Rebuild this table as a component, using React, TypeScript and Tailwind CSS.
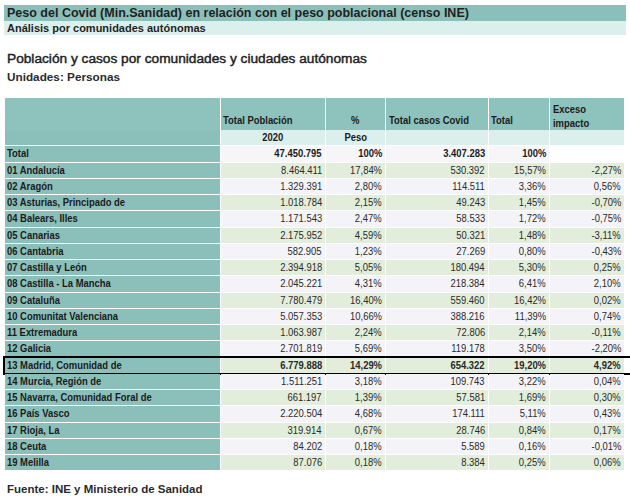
const rows: [string, string, string, string, string, string][] = [
  ["01 Andalucía", "8.464.411", "17,84%", "530.392", "15,57%", "-2,27%"],
  ["02 Aragón", "1.329.391", "2,80%", "114.511", "3,36%", "0,56%"],
  ["03 Asturias, Principado de", "1.018.784", "2,15%", "49.243", "1,45%", "-0,70%"],
  ["04 Balears, Illes", "1.171.543", "2,47%", "58.533", "1,72%", "-0,75%"],
  ["05 Canarias", "2.175.952", "4,59%", "50.321", "1,48%", "-3,11%"],
  ["06 Cantabria", "582.905", "1,23%", "27.269", "0,80%", "-0,43%"],
  ["07 Castilla y León", "2.394.918", "5,05%", "180.494", "5,30%", "0,25%"],
  ["08 Castilla - La Mancha", "2.045.221", "4,31%", "218.384", "6,41%", "2,10%"],
  ["09 Cataluña", "7.780.479", "16,40%", "559.460", "16,42%", "0,02%"],
  ["10 Comunitat Valenciana", "5.057.353", "10,66%", "388.216", "11,39%", "0,74%"],
  ["11 Extremadura", "1.063.987", "2,24%", "72.806", "2,14%", "-0,11%"],
  ["12 Galicia", "2.701.819", "5,69%", "119.178", "3,50%", "-2,20%"],
  ["13 Madrid, Comunidad de", "6.779.888", "14,29%", "654.322", "19,20%", "4,92%"],
  ["14 Murcia, Región de", "1.511.251", "3,18%", "109.743", "3,22%", "0,04%"],
  ["15 Navarra, Comunidad Foral de", "661.197", "1,39%", "57.581", "1,69%", "0,30%"],
  ["16 País Vasco", "2.220.504", "4,68%", "174.111", "5,11%", "0,43%"],
  ["17 Rioja, La", "319.914", "0,67%", "28.746", "0,84%", "0,17%"],
  ["18 Ceuta", "84.202", "0,18%", "5.589", "0,16%", "-0,01%"],
  ["19 Melilla", "87.076", "0,18%", "8.384", "0,25%", "0,06%"],
]

const grid = "grid grid-cols-[215px_104px_59px_102px_60px_74px] gap-x-px"

// no narrow font installed, so squeeze the regular one
function L({ children }: { children: React.ReactNode }) {
  return <span className="inline-block origin-left scale-x-[0.82] whitespace-nowrap">{children}</span>
}
function R({ children }: { children: React.ReactNode }) {
  return <span className="inline-block origin-right scale-x-[0.82] whitespace-nowrap">{children}</span>
}
function C({ children }: { children: React.ReactNode }) {
  return <span className="inline-block origin-center scale-x-[0.82] whitespace-nowrap">{children}</span>
}

function DataRow({ row, index }: { row: string[]; index: number }) {
  const highlight = row[0].startsWith("13 ")
  const bg = index % 2 === 0 ? "bg-[#e2eedb]" : "bg-[#f4f4f8]"
  return (
    <div className={`${grid} h-[15.25px] ${highlight ? "outline-2 outline-black font-bold" : ""}`}>
      <div className="bg-[#8bbfb9] pl-[2px] flex items-center font-bold text-[#1b1b1b]">
        <L>{row[0]}</L>
      </div>
      {row.slice(1).map((v, i) => (
        <div key={i} className={`${bg} pr-[3px] flex items-center justify-end text-[#2a2a2a]`}>
          <R>{v}</R>
        </div>
      ))}
    </div>
  )
}

export default function App() {
  return (
    <div className="w-[630px] h-[498px] bg-white pt-[5px] text-[#1f1f1f]" style={{ fontFamily: '"Liberation Sans", Arial, sans-serif' }}>
      {/* Title bars */}
      <div className="mx-[4px] h-[16px] bg-[#8bbfb9] pl-[3px] flex items-center text-[12.5px] font-bold leading-none">
        Peso del Covid (Min.Sanidad) en relación con el peso poblacional (censo INE)
      </div>
      <div className="mx-[4px] h-[14px] bg-[#dbefed] pl-[3px] flex items-center text-[11px] font-bold leading-none">
        Análisis por comunidades autónomas
      </div>

      <div className="pl-[7px] mt-[17px] text-[13.7px] leading-none text-[#222] [-webkit-text-stroke:0.45px_#222]">
        Población y casos por comunidades y ciudades autónomas
      </div>
      <div className="pl-[7px] mt-[5px] text-[11.75px] font-bold leading-none text-[#2b2b2b]">Unidades: Personas</div>

      {/* Table */}
      <div className="ml-[5px] mt-[16px] flex flex-col gap-y-px text-[11.5px] leading-none">
        <div className={`${grid} h-[31px] font-bold text-[#1b1b1b]`}>
          <div className="bg-[#8ec2bc]" />
          <div className="bg-[#8ec2bc] pl-[2px] pb-[4px] flex items-end">
            <L>Total Población</L>
          </div>
          <div className="bg-[#8ec2bc] pb-[4px] flex items-end justify-center">
            <C>%</C>
          </div>
          <div className="bg-[#8ec2bc] pl-[3px] pb-[4px] flex items-end">
            <L>Total casos Covid</L>
          </div>
          <div className="bg-[#8ec2bc] pl-[2px] pb-[4px] flex items-end">
            <L>Total</L>
          </div>
          <div className="bg-[#8ec2bc] pl-[3px] pt-[4px] leading-[14px]">
            <L>Exceso</L>
            <br />
            <L>impacto</L>
          </div>
        </div>
        <div className={`${grid} h-[15px] font-bold text-[#1b1b1b]`}>
          <div className="bg-[#8bbfb9]" />
          <div className="bg-[#dbefed] flex items-center justify-center">
            <C>2020</C>
          </div>
          <div className="bg-[#dbefed] flex items-center justify-center">
            <C>Peso</C>
          </div>
          <div className="bg-[#dbefed]" />
          <div className="bg-[#dbefed]" />
          <div className="bg-[#dbefed]" />
        </div>
        <div className={`${grid} h-[15.25px] font-bold text-[#1b1b1b]`}>
          <div className="bg-[#8bbfb9] pl-[2px] flex items-center">
            <L>Total</L>
          </div>
          <div className="bg-[#f6f6f9] pr-[3px] flex items-center justify-end">
            <R>47.450.795</R>
          </div>
          <div className="bg-[#f6f6f9] pr-[3px] flex items-center justify-end">
            <R>100%</R>
          </div>
          <div className="bg-[#f6f6f9] pr-[3px] flex items-center justify-end">
            <R>3.407.283</R>
          </div>
          <div className="bg-[#f6f6f9] pr-[3px] flex items-center justify-end">
            <R>100%</R>
          </div>
          <div className="bg-white" />
        </div>
        {rows.map((r, i) => (
          <DataRow key={r[0]} row={r} index={i} />
        ))}
      </div>

      <div className="pl-[7px] mt-[14px] text-[11.5px] font-bold leading-none text-[#2b2b2b]">
        Fuente: INE y Ministerio de Sanidad
      </div>
    </div>
  )
}
